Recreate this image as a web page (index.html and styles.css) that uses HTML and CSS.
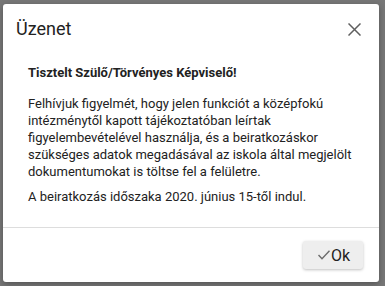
FILE: index.html
```html
<!DOCTYPE html>
<html lang="hu">
<head>
  <meta charset="UTF-8">
  <title>Üzenet</title>
  <link rel="stylesheet" href="styles.css">
</head>
<body>
  <div class="dialog">
    <div class="dialog-header">
      <h1 class="dialog-title">Üzenet</h1>
      <button class="close-btn" aria-label="Bezárás">
        <svg width="13" height="13" viewBox="0 0 13 13">
          <path d="M0.5 0.5 L12.5 12.5 M12.5 0.5 L0.5 12.5" stroke="#5f5f5f" stroke-width="1.5" fill="none"/>
        </svg>
      </button>
    </div>
    <div class="dialog-body">
      <p class="greeting">Tisztelt Szülő/Törvényes Képviselő!</p>
      <p>Felhívjuk figyelmét, hogy jelen funkciót a középfokú intézménytől kapott tájékoztatóban leírtak figyelembevételével használja, és a beiratkozáskor szükséges adatok megadásával az iskola által megjelölt dokumentumokat is töltse fel a felületre.</p>
      <p>A beiratkozás időszaka 2020. június 15-től indul.</p>
    </div>
    <div class="dialog-footer">
      <button class="ok-btn">
        <svg width="12" height="10" viewBox="0 0 12 10">
          <path d="M0.5 5 L4 8.8 L11.5 0.8" stroke="#6b6b6b" stroke-width="1.4" fill="none"/>
        </svg>
        Ok
      </button>
    </div>
  </div>
</body>
</html>
```

FILE: styles.css
```css
* {
  margin: 0;
  padding: 0;
  box-sizing: border-box;
}

body {
  width: 385px;
  height: 286px;
  background: #777777;
  font-family: Roboto, "Noto Sans", sans-serif;
  color: #222;
  padding: 4px 6px 4px 3px;
  overflow: hidden;
}

.dialog {
  background: #fff;
  border-radius: 3px;
  box-shadow: 0 2px 6px rgba(0, 0, 0, 0.3);
  height: 278px;
  display: flex;
  flex-direction: column;
}

.dialog-header {
  display: flex;
  align-items: center;
  justify-content: space-between;
  padding: 0 18px 0 13px;
  height: 48px;
}

.dialog-title {
  font-size: 18px;
  font-weight: 400;
  color: #222;
}

.close-btn {
  background: none;
  border: none;
  display: flex;
  padding: 2px 0 0;
  cursor: pointer;
}

.dialog-body {
  padding: 12px 25px 0 25px;
  font-size: 13px;
  line-height: 17px;
  color: #222;
  flex: 1;
}

.dialog-body p {
  margin-bottom: 8px;
}

.dialog-body .greeting {
  font-weight: 700;
  margin-bottom: 14px;
}

.dialog-footer {
  border-top: 1px solid #dddddd;
  display: flex;
  justify-content: flex-end;
  padding: 13px 16px 0;
  height: 55px;
}

.ok-btn {
  display: flex;
  align-items: center;
  gap: 1px;
  background: #eeeeee;
  border: none;
  border-radius: 3px;
  box-shadow: 0 1px 3px rgba(0, 0, 0, 0.25);
  padding: 0 13px 0 15px;
  height: 28px;
  font-family: Roboto, "Noto Sans", sans-serif;
  font-size: 16px;
  color: #222;
  cursor: pointer;
}
```
